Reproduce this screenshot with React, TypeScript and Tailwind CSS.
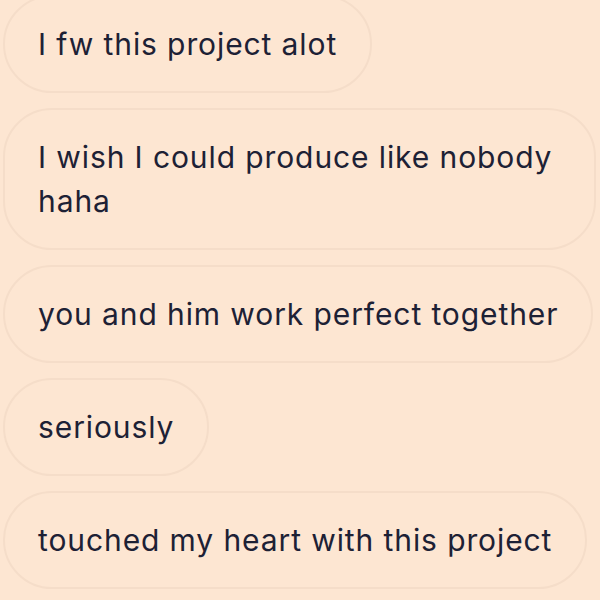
const messages = [
  "I fw this project alot",
  "I wish I could produce like nobody haha",
  "you and him work perfect together",
  "seriously",
  "touched my heart with this project",
];

export default function App() {
  return (
    <main className="w-[600px] h-[600px] overflow-hidden bg-[#fde6d2]" style={{ fontFamily: "Inter, 'Noto Sans', sans-serif" }}>
      <div className="-mt-[5px] pl-[3px] flex flex-col items-start gap-[15px]">
        {messages.map((text) => (
          <div
            key={text}
            className="max-w-[593px] rounded-[49px] border-2 border-[#f5ddc9] bg-[#fde6d2] px-[33px] py-[25px] text-[30px] leading-[44px] tracking-[0.9px] text-[#1d2135]"
          >
            {text}
          </div>
        ))}
      </div>
    </main>
  );
}
